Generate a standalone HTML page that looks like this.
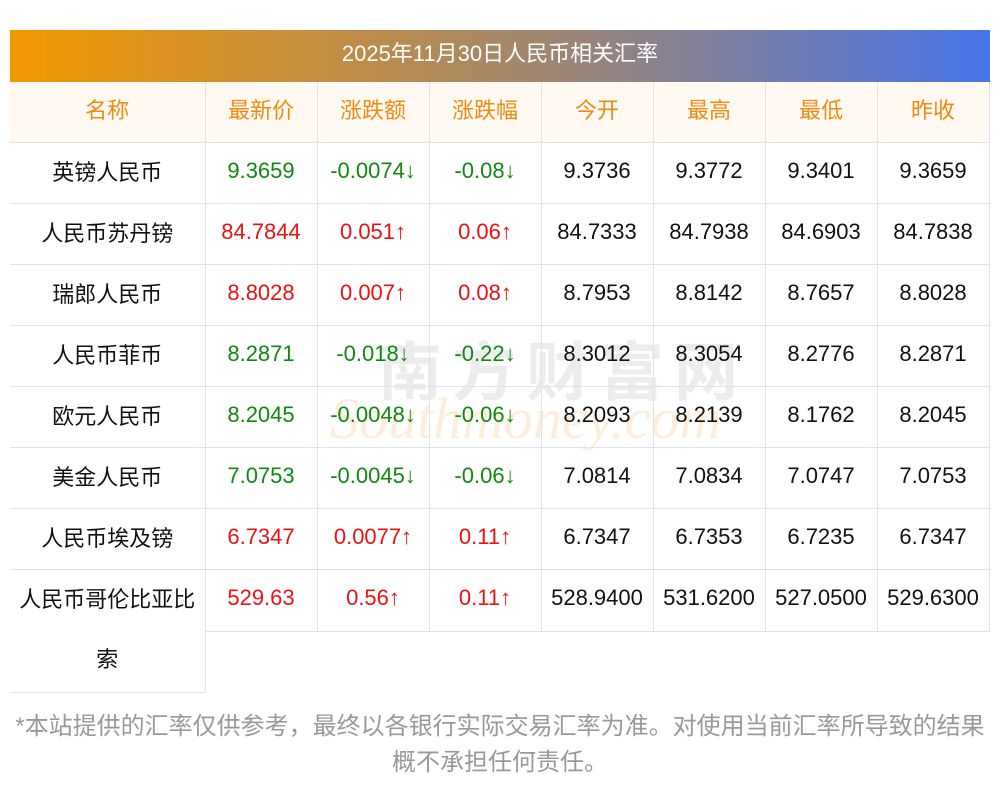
<!DOCTYPE html>
<html><head><meta charset="utf-8"><style>
*{margin:0;padding:0;box-sizing:border-box}
body{width:1000px;height:793px;background:#fff;font-family:"Liberation Sans","Noto Sans CJK SC",sans-serif;position:relative;overflow:hidden}
.title{position:absolute;left:10px;top:30px;width:980px;height:52px;background:linear-gradient(90deg,#f39800,#a08670 55%,#4674ea);color:#fff;font-size:22px;text-align:center;line-height:48px}
table{position:absolute;left:10px;top:82px;border-collapse:collapse;table-layout:fixed}
td{border:1px solid #dfe2ea;text-align:center;font-size:22px;height:61px;color:#111;padding-bottom:4px}
tr.h td{background:#fff9f2;color:#f08a10;height:60px;padding-bottom:5px}
tr:first-child td{border-top:none}
td:first-child{border-left:none}
.g{color:#118811}.r{color:#ee1111}
.wm{position:absolute;left:378px;top:322px;font-size:64px;color:rgba(200,200,200,0.35);font-weight:bold;letter-spacing:10px}
.wm2{position:absolute;left:330px;top:385px;font-size:58px;color:rgba(250,200,140,0.3);font-style:italic;font-family:"Liberation Serif",serif}
.foot{position:absolute;left:0;top:709px;width:1000px;text-align:center;color:#999;font-size:24px;line-height:36px}
</style></head><body>
<div class="title">2025年11月30日人民币相关汇率</div>
<div class="wm">南方财富网</div><div class="wm2">Southmoney.com</div>
<table>
<colgroup><col style="width:195px"><col style="width:112px"><col style="width:112px"><col style="width:112px"><col style="width:112px"><col style="width:112px"><col style="width:112px"><col style="width:112px"></colgroup>
<tr class="h"><td>名称</td><td>最新价</td><td>涨跌额</td><td>涨跌幅</td><td>今开</td><td>最高</td><td>最低</td><td>昨收</td></tr>
<tr><td>英镑人民币</td><td class="g">9.3659</td><td class="g">-0.0074↓</td><td class="g">-0.08↓</td><td>9.3736</td><td>9.3772</td><td>9.3401</td><td>9.3659</td></tr>
<tr><td>人民币苏丹镑</td><td class="r">84.7844</td><td class="r">0.051↑</td><td class="r">0.06↑</td><td>84.7333</td><td>84.7938</td><td>84.6903</td><td>84.7838</td></tr>
<tr><td>瑞郎人民币</td><td class="r">8.8028</td><td class="r">0.007↑</td><td class="r">0.08↑</td><td>8.7953</td><td>8.8142</td><td>8.7657</td><td>8.8028</td></tr>
<tr><td>人民币菲币</td><td class="g">8.2871</td><td class="g">-0.018↓</td><td class="g">-0.22↓</td><td>8.3012</td><td>8.3054</td><td>8.2776</td><td>8.2871</td></tr>
<tr><td>欧元人民币</td><td class="g">8.2045</td><td class="g">-0.0048↓</td><td class="g">-0.06↓</td><td>8.2093</td><td>8.2139</td><td>8.1762</td><td>8.2045</td></tr>
<tr><td>美金人民币</td><td class="g">7.0753</td><td class="g">-0.0045↓</td><td class="g">-0.06↓</td><td>7.0814</td><td>7.0834</td><td>7.0747</td><td>7.0753</td></tr>
<tr><td>人民币埃及镑</td><td class="r">6.7347</td><td class="r">0.0077↑</td><td class="r">0.11↑</td><td>6.7347</td><td>6.7353</td><td>6.7235</td><td>6.7347</td></tr>
<tr><td rowspan="2" style="line-height:60px;height:121px;padding-bottom:2px">人民币哥伦比亚比<br>索</td><td class="r">529.63</td><td class="r">0.56↑</td><td class="r">0.11↑</td><td>528.9400</td><td>531.6200</td><td>527.0500</td><td>529.6300</td></tr>
<tr><td colspan="7" style="border:none;border-top:1px solid #dfe2ea;height:59px"></td></tr>
</table>
<div class="foot">*本站提供的汇率仅供参考，最终以各银行实际交易汇率为准。对使用当前汇率所导致的结果<br>概不承担任何责任。</div>
</body></html>
